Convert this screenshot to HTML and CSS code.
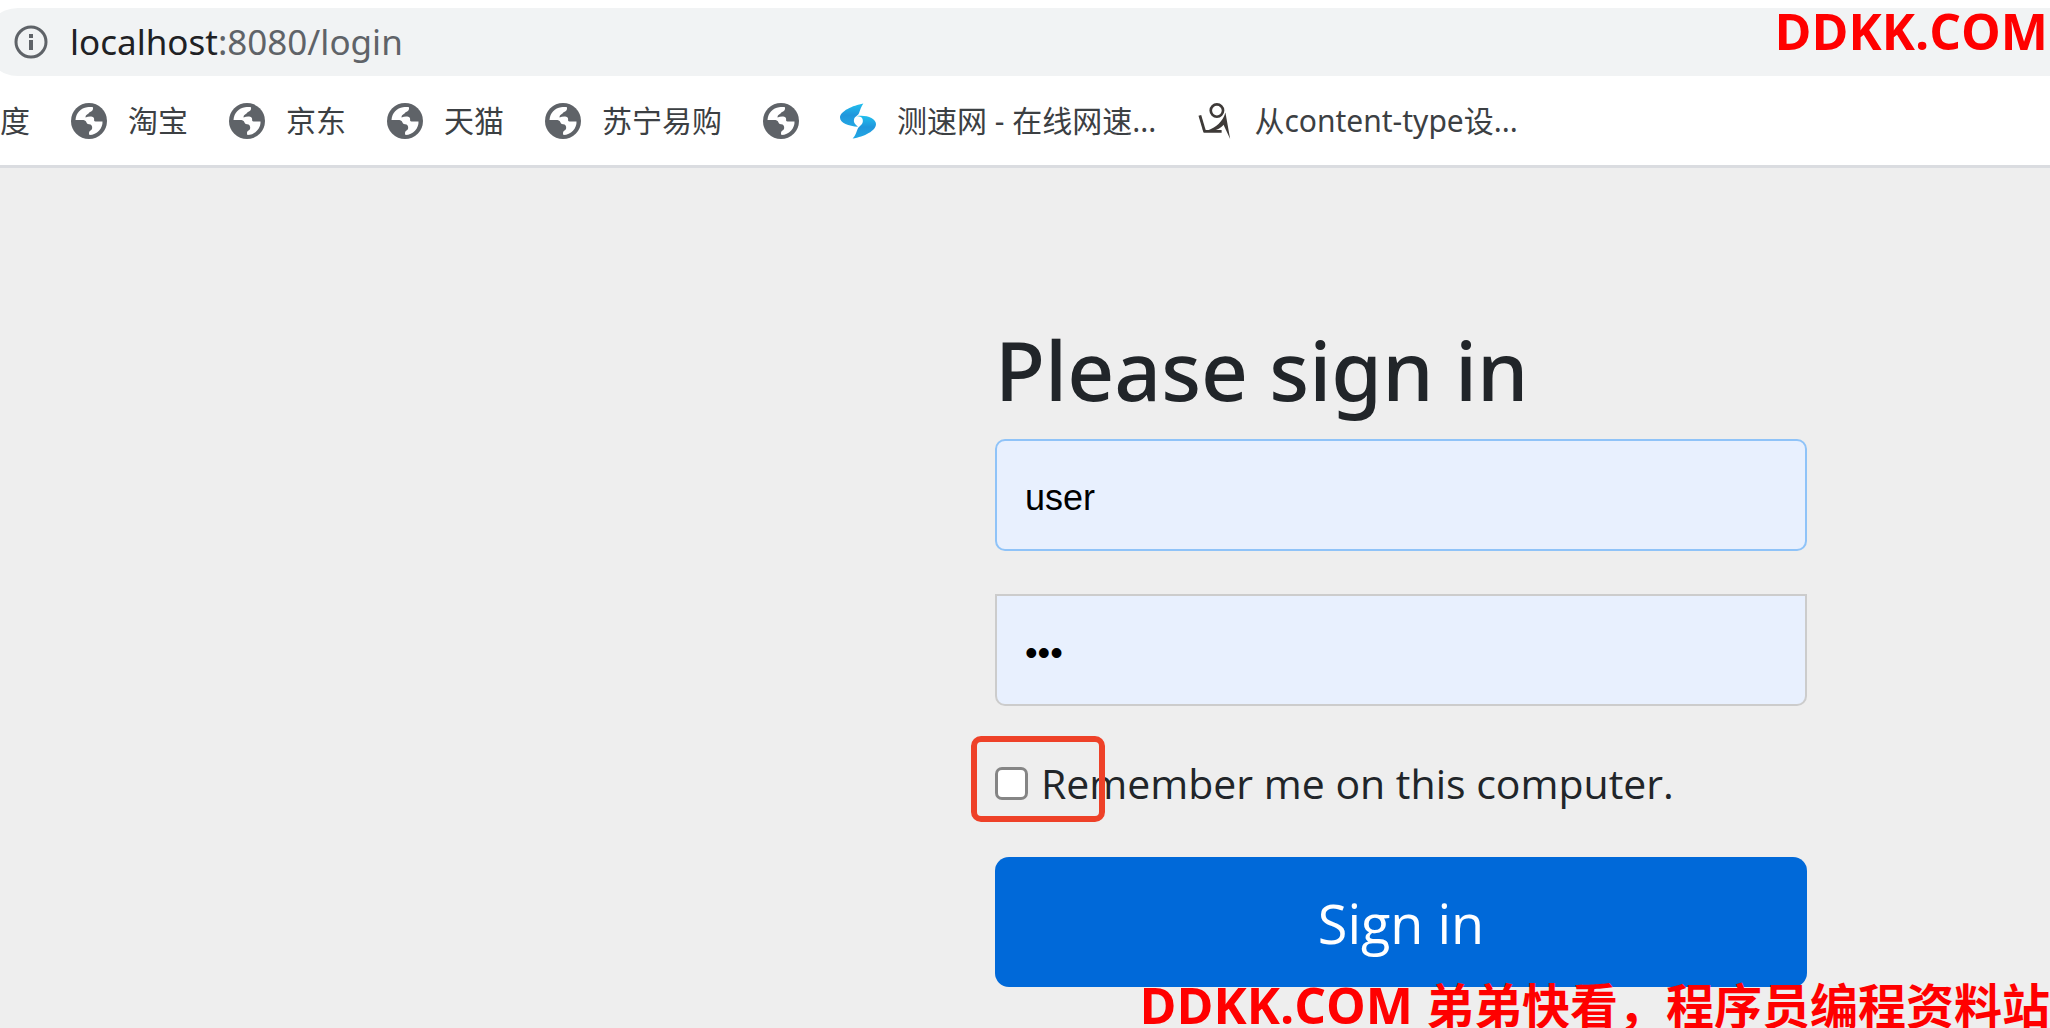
FILE: index.html
```html
<!DOCTYPE html>
<html lang="zh-CN">
<head>
<meta charset="utf-8">
<title>Please sign in</title>
<link rel="stylesheet" href="styles.css">
</head>
<body>
<svg class="sprite" aria-hidden="true">
  <symbol id="globe" viewBox="0 0 36 36">
    <circle cx="18" cy="18" r="18" fill="#5f6368"/>
    <path fill="#fff" d="M4.500 17C5 10 10 5 16 4.300C18 4 20 3.800 22 4.300C22.500 7 21 8.500 18.500 9.200C17.500 11.500 14.500 11 14.500 14.500C17 13.500 21 13 22.500 14.500C24 16 22 18 24.500 18.500H31.500C32 25 26 32 18.500 32C17.500 30.500 18 28 19.500 27.500C22 26.500 21.500 22.500 19.500 21.500C17.500 21 16 21.500 15.500 19.500C15 17.500 13 17 11 17Z"/>
  </symbol>
</svg>

<header class="browser">
  <div class="address">
    <svg class="info" viewBox="0 0 34 34" aria-hidden="true">
      <circle cx="17" cy="17" r="15" fill="none" stroke="#5f6368" stroke-width="3"/>
      <path d="M15 9h4v4h-4zM15 15h4v10h-4z" fill="#5f6368"/>
    </svg>
    <span class="url"><span class="host">localhost</span>:8080/login</span>
  </div>
  <nav class="bookmarks">
    <a class="mark" href="#">度</a>
    <a class="mark" href="#"><svg class="icon"><use href="#globe"/></svg>淘宝</a>
    <a class="mark" href="#"><svg class="icon"><use href="#globe"/></svg>京东</a>
    <a class="mark" href="#"><svg class="icon"><use href="#globe"/></svg>天猫</a>
    <a class="mark" href="#"><svg class="icon"><use href="#globe"/></svg>苏宁易购</a>
    <a class="mark" href="#" aria-label="Bookmark"><svg class="icon"><use href="#globe"/></svg></a>
    <a class="mark" href="#"><svg class="icon" viewBox="0 0 37 36">
      <defs><linearGradient id="swift" x1="0" y1="0" x2="0" y2="1"><stop offset="0" stop-color="#21c0ee"/><stop offset=".5" stop-color="#2196dc"/><stop offset="1" stop-color="#22a8e4"/></linearGradient></defs>
      <path fill="url(#swift)" d="M24 0C13 2 0 8 0 14.500C0 20 9 23.500 18.500 24C15 21 13.500 19 14.500 16C15.500 13 18 13 19.500 10C20.500 7 22 3 24 0Z"/>
      <path fill="url(#swift)" d="M17 13C26 11 37 15 37 21C37 28 25 34 13 36C16 33 17 29 18 26.500C19.500 23 23.500 22 23.500 18C23.500 14 21 13 17 13Z"/>
    </svg>测速网 - 在线网速...</a>
    <a class="mark" href="#"><svg class="icon" viewBox="0 0 36 38">
      <g fill="none" stroke="#3e3a38"><circle cx="20" cy="8" r="6.500" stroke-width="2.800"/><path d="M2 13L7 30" stroke-width="3"/></g>
      <path fill="#3e3a38" d="M5 27L8 28.500H25V31.500H6ZM10 29C19 26 26 20 29 10L34 38L27 23C24 27 18 30 10 29Z"/>
    </svg>从content-type设...</a>
  </nav>
</header>

<main class="page">
  <form class="signin">
    <h1 class="title">Please sign in</h1>
    <input class="field user" type="text" value="user" aria-label="Username">
    <input class="field pass" type="password" value="123" aria-label="Password">
    <label class="remember"><input class="check" type="checkbox">Remember me on this computer.</label>
    <button class="submit" type="button">Sign in</button>
  </form>
</main>

<div class="stamp top">DDKK.COM</div>
<div class="stamp bottom">DDKK.COM <span class="han">弟弟快看，程序员编程资料站</span></div>
</body>
</html>
```
FILE: styles.css
```css
*, *::before { box-sizing: border-box; }
html { height: 100%; }
body {
  position: relative;
  display: flex;
  flex-direction: column;
  min-height: 100%;
  margin: 0;
  overflow: hidden;
  background: #eee;
  color: #212529;
  font-family: "Open Sans", "Noto Sans CJK SC", sans-serif;
}
.sprite { display: none; }

.browser {
  padding-top: 8px;
  background: #fff;
  border-bottom: 3px solid #dadce0;
}
.address {
  display: flex;
  align-items: center;
  gap: 22px;
  height: 68px;
  margin-left: -16px;
  padding-left: 30px;
  border-radius: 34px 0 0 34px;
  background: #f1f3f4;
}
.info { width: 34px; height: 34px; }
.url { font: 35px/48px "Noto Sans", sans-serif; color: #5f6368; }
.host { color: #202124; }
.bookmarks {
  display: flex;
  align-items: center;
  gap: 41px;
  height: 89px;
}
.mark {
  display: flex;
  align-items: center;
  gap: 21px;
  color: #3c4043;
  font: 400 30px/44px "Noto Sans", "Noto Sans CJK SC", sans-serif;
  font-weight: 400;
  text-decoration: none;
  white-space: nowrap;
}
.icon { flex: none; width: 36px; height: 36px; }

.page { padding: 155px 243px 40px 0; }
.signin {
  display: flex;
  flex-direction: column;
  width: 100%;
  max-width: 812px;
  margin-left: auto;
}
.title {
  margin: 0 0 24px;
  font: 500 82px/92px "Noto Sans", sans-serif;
}
.field {
  width: 100%;
  height: 112px;
  padding: 6px 28px 0;
  border: 2px solid #ccc;
  background: #e8f0fe;
  color: #000;
  font: 36px/48px "Liberation Sans", sans-serif;
}
.user { border-color: #8fc3f8; border-radius: 10px; }
.pass { margin-top: 43px; border-radius: 0 0 10px 10px; }
.remember {
  position: relative;
  display: flex;
  align-items: center;
  gap: 13px;
  margin: 48px 0 44px;
  font-size: 41px;
  line-height: 59px;
}
.remember::before {
  content: "";
  position: absolute;
  left: -24px;
  top: -18px;
  width: 134px;
  height: 86px;
  border: 6px solid #ee4128;
  border-radius: 10px;
}
.check {
  appearance: none;
  width: 33px;
  height: 33px;
  margin: 0;
  border: 3px solid #858585;
  border-radius: 7px;
  background: #fff;
}
.submit {
  height: 130px;
  padding: 2px 0 0;
  border: 0;
  border-radius: 14px;
  background: #0069d9;
  color: #fff;
  font: 54px/80px "Open Sans", sans-serif;
}
.stamp {
  position: absolute;
  right: 0;
  color: #f00;
  font: bold 50px/60px "Open Sans", "Noto Sans CJK SC", sans-serif;
  white-space: nowrap;
}
.top { top: 1px; right: 2px; }
.bottom { bottom: -8px; }
.han { font-size: 48px; }
```
